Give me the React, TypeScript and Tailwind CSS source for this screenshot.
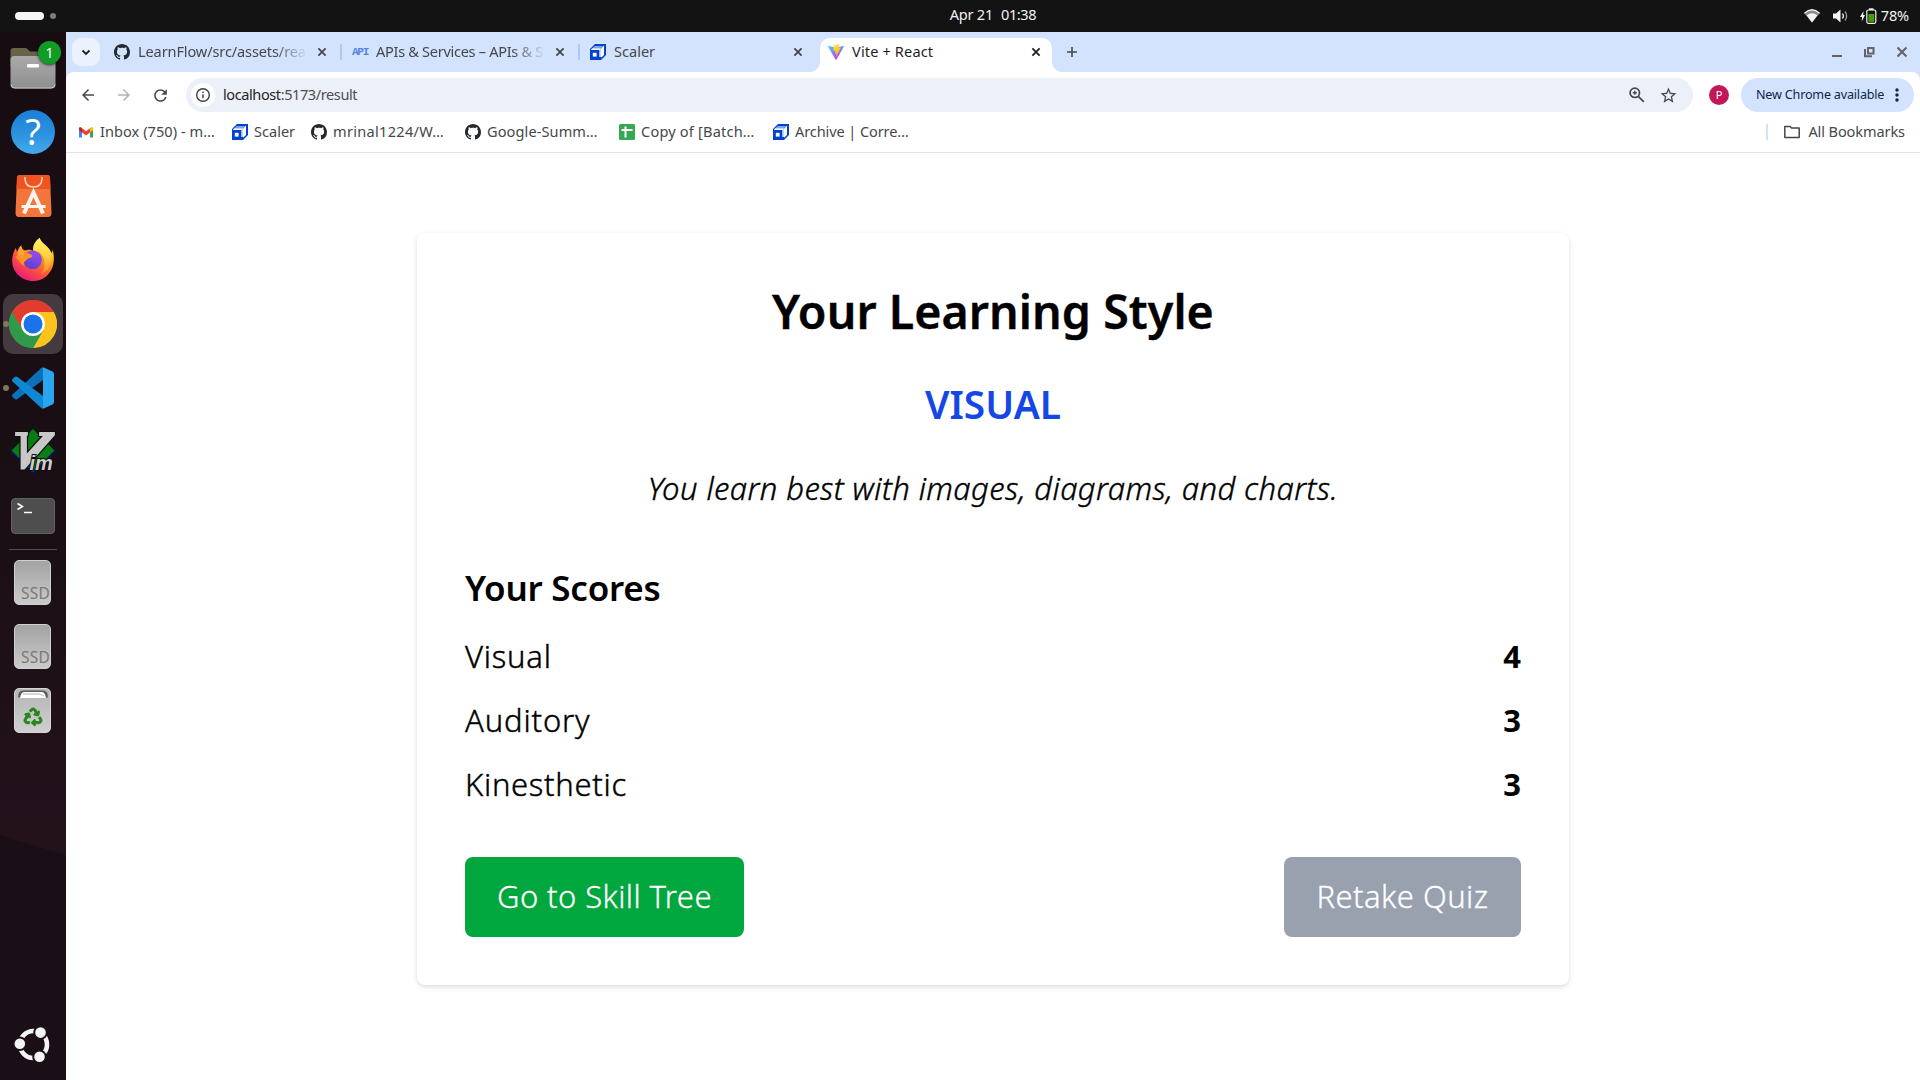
import type { ReactNode } from "react";
import { MdArrowBack, MdArrowForward, MdMoreVert, MdRefresh, MdStarOutline } from "react-icons/md";
import { FaRecycle } from "react-icons/fa";

/* ---------- small icons ---------- */

function GithubIcon() {
  return (
    <svg viewBox="0 0 16 16" className="size-4 shrink-0" fill="#24292f">
      <path d="M8 0C3.58 0 0 3.58 0 8c0 3.54 2.29 6.53 5.47 7.59.4.07.55-.17.55-.38 0-.19-.01-.82-.01-1.49-2.01.37-2.53-.49-2.69-.94-.09-.23-.48-.94-.82-1.13-.28-.15-.68-.52-.01-.53.63-.01 1.08.58 1.23.82.72 1.21 1.87.87 2.33.66.07-.52.28-.87.51-1.07-1.78-.2-3.64-.89-3.64-3.95 0-.87.31-1.59.82-2.15-.08-.2-.36-1.02.08-2.12 0 0 .67-.21 2.2.82.64-.18 1.32-.27 2-.27s1.36.09 2 .27c1.53-1.04 2.2-.82 2.2-.82.44 1.1.16 1.92.08 2.12.51.56.82 1.27.82 2.15 0 3.07-1.87 3.75-3.65 3.95.29.25.54.73.54 1.48 0 1.07-.01 1.93-.01 2.2 0 .21.15.46.55.38A8.01 8.01 0 0 0 16 8c0-4.42-3.58-8-8-8z" />
    </svg>
  );
}

function ScalerIcon() {
  return (
    <svg viewBox="0 0 16 16" className="size-4 shrink-0">
      <path d="M5 0H16V11L11 16H0V5L5 0Z" fill="#0043ce" />
      <path d="M4.600 2H13L10.800 4.200H2.400Z" fill="#7fa3ee" />
      <path d="M2 4.200H10.800V13H9.400V6H1Z" fill="#ffffff" />
      <path d="M11 4.400L14 1.600V11L11 13.800Z" fill="#ffffff" />
      <path d="M0 6H9V16H0Z" fill="#0043ce" />
      <rect x="2.800" y="8.800" width="3.800" height="3.800" fill="#ffffff" />
    </svg>
  );
}

function ApiIcon() {
  return (
    <span className="flex size-4 shrink-0 items-center justify-center font-['Liberation_Mono'] text-[11px] font-bold tracking-[-1.3px] text-[#5583e6]">
      API
    </span>
  );
}

function ViteIcon() {
  return (
    <svg viewBox="0 0 32 32" className="size-4 shrink-0">
      <defs>
        <linearGradient id="viteBody" x1="0" y1="0" x2="0.6" y2="1">
          <stop offset="0" stopColor="#41d1ff" />
          <stop offset="1" stopColor="#bd34fe" />
        </linearGradient>
        <linearGradient id="viteBolt" x1="0.4" y1="0" x2="0.6" y2="1">
          <stop offset="0" stopColor="#ffea83" />
          <stop offset="0.2" stopColor="#ffdd35" />
          <stop offset="1" stopColor="#ffa800" />
        </linearGradient>
      </defs>
      <path d="M31.5 5.4L16.7 31.3a.8.8 0 0 1-1.4 0L.2 5.4A.8.8 0 0 1 1 4.200L16 6.900 30.700 4.200a.8.8 0 0 1 .8 1.200Z" fill="url(#viteBody)" />
      <path d="M22.800.01L11.900 2.100a.4.4 0 0 0-.3.4L10.900 13.800c0 .3.200.5.500.4l3-.7c.3-.1.5.2.5.5l-.9 4.400c-.1.3.2.6.5.5l1.900-.6c.3-.1.6.2.5.5l-1.400 6.900c-.1.4.5.7.7.3l9.200-18.400c.1-.3-.1-.6-.5-.6l-3.300.6c-.3.100-.600-.200-.500-.500l2.100-6.600c.1-.3-.1-.6-.4-.5Z" fill="url(#viteBolt)" />
    </svg>
  );
}

function GmailIcon() {
  return (
    <svg viewBox="0 0 16 16" className="size-4 shrink-0">
      <path d="M1 4V13.500H4V7.500Z" fill="#4285f4" />
      <path d="M15 4V13.500H12V7.500Z" fill="#34a853" />
      <path d="M12 4.200L13.200 3.200Q15 2.600 15 4.600V6.200L12 8.500Z" fill="#fbbc04" />
      <path d="M4 4.200L8 7.200L12 4.200V8.500L8 11.500L4 8.500Z" fill="#ea4335" />
      <path d="M4 4.200L2.800 3.200Q1 2.600 1 4.600V6.200L4 8.500Z" fill="#c5221f" />
    </svg>
  );
}

function SheetIcon() {
  return (
    <svg viewBox="0 0 16 16" className="size-4 shrink-0">
      <rect width="16" height="16" rx="1.500" fill="#34a853" />
      <path d="M2.500 6H13.500M6.500 2.500V13.500" stroke="#fff" strokeWidth="2" />
    </svg>
  );
}

function CloseIcon({ color }: { color: string }) {
  return (
    <svg viewBox="0 0 16 16" className="size-4 shrink-0" fill="none" stroke={color} strokeWidth="1.800">
      <path d="M4.400 4.400L11.600 11.600M11.600 4.400L4.400 11.600" />
    </svg>
  );
}

/* ---------- desktop top bar ---------- */

function TopBar() {
  return (
    <header className="relative flex h-8 items-center justify-between bg-[#131313] pl-[15px] pr-[11px] text-[14.55px] text-[#f2f2f2]">
      <div className="flex items-center gap-[6px]">
        <div className="h-2 w-[29px] rounded-full bg-[#f5f5f5]" />
        <div className="size-[6px] rounded-full bg-[#7d7d7d]" />
      </div>
      <div className="absolute left-[66px] right-0 flex justify-center gap-[8px] pb-[2px]">
        <span className="tracking-[-0.25px]">Apr 21</span>
        <span className="tracking-[-0.4px]">01:38</span>
      </div>
      <div className="flex items-center">
        <svg viewBox="0 0 16 14" className="mr-[13px] h-[14px] w-4">
          <path d="M0.300 4.300Q8-2.600 15.700 4.300L8 13.500Z" fill="#8a8a8a" />
          <path d="M0.300 4.300Q8-2.600 15.700 4.300" fill="none" stroke="#f2f2f2" strokeWidth="1.400" />
          <path d="M2.600 6.200Q8 2.200 13.400 6.200L8 13.500Z" fill="#f2f2f2" />
        </svg>
        <svg viewBox="0 0 16 14" className="mr-[11px] h-[14px] w-4" fill="none" stroke="#f2f2f2">
          <path d="M0 4.500H3L7.500 0.500V13.500L3 9.500H0Z" fill="#f2f2f2" stroke="none" />
          <path d="M9.500 4.500Q11.200 7 9.500 9.500" strokeWidth="1.300" />
          <path d="M12 2.500Q15.300 7 12 11.500" stroke="#9a9a9a" strokeWidth="1.300" />
        </svg>
        <svg viewBox="0 0 17 16" className="mr-[4px] h-4 w-[17px]">
          <path d="M3.500 3L0 9H2L1.800 13.500L5 7H3.200Z" fill="#f2f2f2" />
          <rect x="6.800" y="2" width="9" height="13.300" rx="1.500" fill="none" stroke="#f2f2f2" strokeWidth="1.200" />
          <rect x="9" y="0.300" width="4.500" height="1.800" fill="#f2f2f2" />
          <rect x="8.300" y="6" width="6" height="7.800" fill="#4e9a06" />
        </svg>
        <span className="tracking-[-0.2px]">78%</span>
      </div>
    </header>
  );
}

/* ---------- dock ---------- */

function FilesIcon() {
  return (
    <div className="relative">
      <svg viewBox="0 0 46 44" className="h-11 w-[46px]">
        <defs>
          <linearGradient id="folderFront" x1="0" y1="0" x2="0" y2="1">
            <stop offset="0" stopColor="#ababab" />
            <stop offset="1" stopColor="#8e8e8e" />
          </linearGradient>
        </defs>
        <path d="M0.500 14V5Q0.500 2 3.500 2H15Q17 2 18.500 4L20 5.500H42Q45 5.500 45 8.500V20H0.500Z" fill="#66634a" />
        <rect x="0.500" y="10" width="45" height="32.500" rx="4" fill="url(#folderFront)" />
        <path d="M1 38.500Q1 42 5 42H41Q45 42 45 38.500" fill="none" stroke="#c4c4c4" />
        <rect x="17" y="18" width="12" height="3.500" rx="1.200" fill="#ffffff" />
      </svg>
      <div className="absolute -right-[5px] -top-[5px] flex size-[23px] items-center justify-center rounded-full bg-[#119c26] text-[14px] leading-none text-white shadow-[0_1px_3px_rgba(0,0,0,0.7)]">
        1
      </div>
    </div>
  );
}

function HelpIcon() {
  return (
    <div className="flex size-11 items-center justify-center rounded-full bg-linear-to-b from-[#1b80d8] via-[#2a90de] to-[#44aaec] text-[36px] leading-none text-white">
      ?
    </div>
  );
}

function StoreIcon() {
  return (
    <svg viewBox="0 0 37 42" className="h-[42px] w-[37px]">
      <path d="M5 0H32Q35 0 35 3L36.500 38Q36.500 42 33 42H4Q0.500 42 0.500 38L2 3Q2 0 5 0Z" fill="#f2763c" />
      <path d="M5 0H32Q35 0 35 3L35.500 14H1.500L2 3Q2 0 5 0Z" fill="#ef5420" />
      <path d="M10 2V4Q10.500 12 18.500 12Q26.500 12 27 4V2" fill="none" stroke="#fdd9c8" strokeWidth="1.500" />
      <path d="M9 38.500L18.500 17.500L28 38.500" fill="none" stroke="#fff4ee" strokeWidth="4" />
      <path d="M6.500 31.500H30.500" stroke="#fff4ee" strokeWidth="3" />
    </svg>
  );
}

function FirefoxIcon() {
  return (
    <svg viewBox="0 0 126 130" className="mb-[2px] h-[43px] w-[42px]">
      <defs>
        <linearGradient id="foxFlame" x1="0.850" y1="0.050" x2="0.250" y2="1">
          <stop offset="0" stopColor="#fff44f" />
          <stop offset="0.300" stopColor="#ffa91e" />
          <stop offset="0.600" stopColor="#ff5a36" />
          <stop offset="1" stopColor="#e8157e" />
        </linearGradient>
        <linearGradient id="foxGlobe" x1="0.800" y1="0" x2="0.300" y2="1">
          <stop offset="0" stopColor="#9a4df5" />
          <stop offset="1" stopColor="#5b3fc8" />
        </linearGradient>
        <linearGradient id="foxTail" x1="0.500" y1="0" x2="0.500" y2="1">
          <stop offset="0" stopColor="#fff36b" />
          <stop offset="0.500" stopColor="#ffd23a" />
          <stop offset="1" stopColor="#ff8a2a" />
        </linearGradient>
      </defs>
      <path d="M83 0C88 18 112 24 119 46C122 42 122 38 121 33C127 48 127 64 125 76C119 110 92 130 63 130C28 130 0 102 0 68C0 54 4 42 11 30L15 42C18 34 22 26 28 22C28 30 32 36 38 38C48 34 58 36 64 40C60 24 72 8 83 0Z" fill="url(#foxFlame)" />
      <path d="M83 0C88 18 112 24 119 50C122 78 110 100 88 108C100 92 102 66 88 48C82 40 70 42 64 36C62 22 72 8 83 0Z" fill="url(#foxTail)" />
      <circle cx="62" cy="66" r="28" fill="url(#foxGlobe)" />
      <path d="M10 58C18 46 28 44 38 46C48 44 56 50 62 54C60 62 46 60 44 66C40 72 32 70 36 84C24 78 20 66 10 58Z" fill="#ff9324" />
      <path d="M26 24C28 32 34 38 42 40C36 44 34 48 36 54C28 50 22 50 16 54C16 42 20 32 26 24Z" fill="#ffa436" />
    </svg>
  );
}

function ChromeIcon() {
  return (
    <svg viewBox="0 0 48 48" className="size-12">
      <circle cx="24" cy="24" r="24" fill="#34a04f" />
      <path d="M24 24L3.200 12A24 24 0 0 1 44.800 12Z" fill="#e33b2e" />
      <path d="M24 12H44.800A24 24 0 0 1 24 48L34.400 30Z" fill="#fcc31e" />
      <path d="M3.200 12A24 24 0 0 0 24 48L34.400 30L13.600 30Z" fill="#2f9a4a" />
      <path d="M3.200 12L13.600 30L24 12Z" fill="#e33b2e" />
      <circle cx="24" cy="24" r="12" fill="#ffffff" />
      <circle cx="24" cy="24" r="9.500" fill="#1a73e8" />
    </svg>
  );
}

function CodeIcon() {
  return (
    <svg viewBox="0 0 42 42" className="size-[42px]">
      <path d="M31 0.500V13L5.500 32Q4 33 2.800 32L0.500 30Q-0.500 28.500 0.500 27.500L29 1.200Q30 0.300 31 0.500Z" fill="#0b71b8" />
      <path d="M31 41.500V29L5.500 10Q4 9 2.800 10L0.500 12Q-0.500 13.500 0.500 14.500L29 40.800Q30 41.700 31 41.500Z" fill="#1188d4" />
      <path d="M31 0.300L40.500 4.500Q42 5.300 42 7V35Q42 36.700 40.500 37.500L31 41.700Z" fill="#2aa5f0" />
    </svg>
  );
}

function VimIcon() {
  return (
    <svg viewBox="0 0 46 46" className="mb-[2px] size-[46px]">
      <path d="M23 0.500L45.500 23L23 45.500L0.500 23Z" fill="#0a7d12" stroke="#04120a" />
      <path d="M1 23L23 45L45 23" fill="none" stroke="#0b0b78" strokeWidth="1.600" />
      <path d="M4.500 3.500H18.500V7.500L17.500 8.500V24L31.500 8.500H28.500V3.500H45.500V7.500L15 42H10V8.500H4.500Z" fill="#c8c8c8" stroke="#0d0d0d" strokeWidth="1.200" />
      <text x="19.500" y="42" fontFamily="Liberation Sans" fontSize="20" fontStyle="italic" fontWeight="700" fill="#cccccc" stroke="#0d0d0d" strokeWidth="2" paintOrder="stroke">
        im
      </text>
    </svg>
  );
}

function TerminalIcon() {
  return (
    <svg viewBox="0 0 44 36" className="h-9 w-11">
      <rect x="0.500" y="0.500" width="43" height="35" rx="3.500" fill="#4e4e4e" stroke="#616161" />
      <path d="M6.500 5.500L11.500 8.500L6.500 11.500" fill="none" stroke="#fff" strokeWidth="1.500" />
      <path d="M13 14.500H21" stroke="#fff" strokeWidth="1.500" />
    </svg>
  );
}

function DriveIcon() {
  return (
    <div className="mb-px mr-px flex h-[45px] w-[37px] items-end justify-end rounded-[5px] border border-[#d0d0d0] bg-linear-to-b from-[#a3a3a3] to-[#cacaca] pb-[2px] text-[15.5px] leading-[18px] tracking-[0.2px] text-[#7a7a7a]">
      SSD
    </div>
  );
}

function TrashIcon() {
  return (
    <div className="relative mb-px mr-px flex h-[45px] w-[37px] items-center justify-center rounded-[5px] border border-[#d6d6d6] bg-linear-to-b from-[#b5b5b5] to-[#cfcfcf] pt-[12px]">
      <svg viewBox="0 0 30 8" className="absolute left-[3px] top-[1px] h-2 w-[30px]">
        <path d="M0 7.500Q0 0.500 5 0.500H25Q30 0.500 30 7.500Z" fill="#5a5a5a" />
        <path d="M2 8Q3 2 6 2H24Q27 2 28 8Z" fill="#ffffff" />
        <path d="M5 4H22L26 6" fill="none" stroke="#b0b0b0" />
      </svg>
      <FaRecycle className="size-[18px] stroke-[#26851c] stroke-[28px] overflow-visible text-[#26851c]" />
    </div>
  );
}

function UbuntuIcon() {
  return (
    <svg viewBox="0 0 40 40" className="size-10">
      <circle cx="20.500" cy="20.500" r="13.500" fill="none" stroke="#f4f4f4" strokeWidth="4.600" />
      <g fill="#f4f4f4" stroke="#1c1017" strokeWidth="2">
        <circle cx="27.500" cy="8.600" r="6.300" />
        <circle cx="6.800" cy="19.800" r="6.300" />
        <circle cx="26.500" cy="32.800" r="6.300" />
      </g>
    </svg>
  );
}

function DockItem({ children, active = false, running = false }: { children: ReactNode; active?: boolean; running?: boolean }) {
  return (
    <div className="relative flex h-16 w-full shrink-0 items-center justify-center">
      <div className={active ? "flex size-[60px] items-center justify-center rounded-[10px] bg-[#463a41]" : "flex size-[60px] items-center justify-center"}>
        {children}
      </div>
      {running && <div className="absolute left-[3px] top-[29px] size-[6px] rounded-full bg-[#7f7859]" />}
    </div>
  );
}

function Dock() {
  return (
    <aside className="flex w-[66px] shrink-0 flex-col items-center bg-[linear-gradient(197deg,transparent_0%,transparent_77%,#1a0f16_77.1%),linear-gradient(180deg,#170c12_0%,#1b0f16_50%,#24121b_78%)] py-1">
      <DockItem><FilesIcon /></DockItem>
      <DockItem><HelpIcon /></DockItem>
      <DockItem><StoreIcon /></DockItem>
      <DockItem><FirefoxIcon /></DockItem>
      <DockItem active running><ChromeIcon /></DockItem>
      <DockItem running><CodeIcon /></DockItem>
      <DockItem><VimIcon /></DockItem>
      <DockItem><TerminalIcon /></DockItem>
      <div className="my-px h-px w-12 shrink-0 bg-[#564b51]" />
      <DockItem><DriveIcon /></DockItem>
      <DockItem><DriveIcon /></DockItem>
      <DockItem><TrashIcon /></DockItem>
      <div className="mt-auto">
        <DockItem><UbuntuIcon /></DockItem>
      </div>
    </aside>
  );
}

/* ---------- browser chrome ---------- */

function Tab({ icon, children, divider = false }: { icon: ReactNode; children: ReactNode; divider?: boolean }) {
  return (
    <div className="relative flex h-[28px] w-[238px] items-center pl-[11px] text-[#45474a]">
      {icon}
      <div className="ml-2 w-[170px] whitespace-nowrap">{children}</div>
      <div className="ml-[6px]"><CloseIcon color="#45474a" /></div>
      {divider && <div className="absolute -right-px top-[6px] h-4 w-[2px] rounded-full bg-[#a8c7fa]" />}
    </div>
  );
}

function TabStrip() {
  return (
    <div className="flex h-10 bg-[#d3e3fd] pl-[6px] pt-[6px] text-[14.55px]">
      <div className="mr-[3px] flex size-7 items-center justify-center rounded-[9px] bg-[#ebf1fd]">
        <svg viewBox="0 0 10 10" className="size-[10px]" fill="none" stroke="#1f1f1f" strokeWidth="1.800">
          <path d="M1.500 3.500L5 7L8.500 3.500" />
        </svg>
      </div>
      <Tab icon={<GithubIcon />} divider>
        <div className="tracking-[-0.12px] [mask-image:linear-gradient(to_right,#000_80%,transparent_100%)]">LearnFlow/src/assets/rea</div>
      </Tab>
      <Tab icon={<ApiIcon />} divider>
        <div className="tracking-[-0.3px] [mask-image:linear-gradient(to_right,#000_80%,transparent_100%)]">APIs &amp; Services – APIs &amp; S</div>
      </Tab>
      <Tab icon={<ScalerIcon />}>Scaler</Tab>
      <div className="relative mx-[3px] flex h-[34px] w-[232px] items-start rounded-t-[10px] bg-white pl-2 text-[#1f1f1f]">
        <div className="absolute -left-[10px] bottom-0 size-[10px] bg-[radial-gradient(circle_at_0_0,#d3e3fd_9.500px,#fff_10.200px)]" />
        <div className="absolute -right-[10px] bottom-0 size-[10px] bg-[radial-gradient(circle_at_100%_0,#d3e3fd_9.500px,#fff_10.200px)]" />
        <div className="flex h-7 items-center">
          <ViteIcon />
          <span className="ml-2 w-[176px] tracking-[0.15px]">Vite + React</span>
          <CloseIcon color="#1f1f1f" />
        </div>
      </div>
      <svg viewBox="0 0 12 12" className="ml-[11px] mt-2 size-3" fill="none" stroke="#45474a" strokeWidth="1.600">
        <path d="M6 1V11M1 6H11" />
      </svg>
      <div className="ml-auto flex h-7 items-center gap-[17px] pr-[10px]">
        <svg viewBox="0 0 16 16" className="size-4"><rect x="4" y="11" width="10" height="2" fill="#5f6368" /></svg>
        <svg viewBox="0 0 16 16" className="size-4" fill="none" stroke="#5f6368" strokeWidth="2">
          <rect x="7" y="4" width="5.500" height="5.500" />
          <path d="M4 5V12.300H11" />
        </svg>
        <svg viewBox="0 0 16 16" className="size-4" fill="none" stroke="#5f6368" strokeWidth="2">
          <path d="M3.500 3.500L12.500 12.500M12.500 3.500L3.500 12.500" />
        </svg>
      </div>
    </div>
  );
}

function Toolbar() {
  return (
    <div className="bg-[#d3e3fd]">
      <div className="flex h-[46px] items-center rounded-t-[8px] bg-white pl-[13px] pr-[6px] text-[14.55px]">
        <MdArrowBack className="size-[18px] text-[#45474a]" />
        <MdArrowForward className="ml-[18px] size-[18px] text-[#b0b2b5]" />
        <MdRefresh className="ml-[18px] size-[19px] text-[#45474a]" />
        <div className="ml-4 flex h-[34px] w-[1507px] items-center rounded-full bg-[#ecf0f9] pl-[5px] pr-[15px]">
          <div className="flex size-6 items-center justify-center rounded-full bg-white">
            <svg viewBox="0 0 16 16" className="size-4" fill="none" stroke="#3c3e41" strokeWidth="1.400">
              <circle cx="8" cy="8" r="6.300" />
              <path d="M8 7.200V11.300M8 4.600V6.100" />
            </svg>
          </div>
          <div className="ml-2 tracking-[-0.42px] text-[#4b4d50]">
            <span className="text-[#1f1f1f]">localhost</span>:5173/result
          </div>
          <svg viewBox="0 0 18 18" className="ml-auto size-[18px]" fill="none" stroke="#45474a" strokeWidth="1.700">
            <circle cx="6.800" cy="6.800" r="4.700" />
            <path d="M10.300 10.300L15.800 15.800" />
            <path d="M4.800 6.800H8.800M6.800 4.800V8.800" strokeWidth="1.400" />
          </svg>
          <MdStarOutline className="ml-[13px] size-[19px] text-[#45474a]" />
        </div>
        <div className="ml-4 flex size-5 items-center justify-center rounded-full bg-[#c2185b] text-[11px] text-white">P</div>
        <div className="ml-auto flex h-[34px] w-[173px] items-center rounded-full bg-[#d3e3fd] pl-[15px] text-[12.600px] text-[#0b2552]">
          <span className="w-[131px] whitespace-nowrap tracking-[-0.2px]">New Chrome available</span>
          <MdMoreVert className="size-5" />
        </div>
      </div>
    </div>
  );
}

function BookmarkBar() {
  return (
    <div className="flex h-[35px] items-start border-b border-[#e0e2e5] bg-white pl-3 pr-[15px] pt-[3px] text-[14.55px] text-[#45474a]">
      <div className="flex h-[22px] w-[154px] items-center gap-[6px]"><GmailIcon /><span className="tracking-[0.05px]">Inbox (750) - m…</span></div>
      <div className="flex h-[22px] w-[79px] items-center gap-[6px]"><ScalerIcon /><span>Scaler</span></div>
      <div className="flex h-[22px] w-[154px] items-center gap-[6px]"><GithubIcon /><span className="tracking-[0.3px]">mrinal1224/W…</span></div>
      <div className="flex h-[22px] w-[154px] items-center gap-[6px]"><GithubIcon /><span className="tracking-[0.100px]">Google-Summ…</span></div>
      <div className="flex h-[22px] w-[154px] items-center gap-[6px]"><SheetIcon /><span className="tracking-[0.2px]">Copy of [Batch…</span></div>
      <div className="flex h-[22px] items-center gap-[6px]"><ScalerIcon /><span className="tracking-[-0.1px]">Archive | Corre…</span></div>
      <div className="ml-auto flex h-[22px] items-center">
        <div className="h-4 w-[2px] bg-[#d3e3fd]" />
        <svg viewBox="0 0 16 14" className="ml-4 h-[14px] w-4" fill="none" stroke="#45474a" strokeWidth="1.500">
          <path d="M0.800 1.500H6L7.500 3H15.200V12.500H0.800Z" strokeLinejoin="round" />
        </svg>
        <span className="ml-2 tracking-[-0.1px]">All Bookmarks</span>
      </div>
    </div>
  );
}

/* ---------- page ---------- */

const scores = [
  { label: "Visual", value: 4, spacing: "tracking-[0.75px]" },
  { label: "Auditory", value: 3, spacing: "tracking-[0.85px]" },
  { label: "Kinesthetic", value: 3, spacing: "tracking-[0.7px]" },
];

function ResultPage() {
  return (
    <main className="flex-1 bg-white pt-20">
      <section className="mx-auto w-6xl rounded-lg bg-white p-12 text-black shadow-[0_2px_6px_rgba(0,0,0,0.1),0_2px_4px_-2px_rgba(0,0,0,0.1)]">
        <h1 className="mb-8 pb-1 text-center text-[46.500px] font-semibold leading-[60px] tracking-[0.08px] [-webkit-text-stroke:0.4px_#000]">Your Learning Style</h1>
        <h2 className="mb-8 pb-0.5 text-center text-[38.800px] font-semibold leading-[54px] text-blue-700">VISUAL</h2>
        <p className="mb-12 pb-0.5 text-center text-[31px] font-light italic leading-[46px] tracking-[0.4px] [-webkit-text-stroke:0.4px_#000]">
          You learn best with images, diagrams, and charts.
        </p>
        <h3 className="mb-4 pb-0.5 text-[35px] font-semibold leading-[54px] tracking-[-0.25px]">Your Scores</h3>
        <ul className="flex flex-col gap-4 text-[31px] leading-[46px]">
          {scores.map((s) => (
            <li key={s.label} className="flex justify-between pb-0.5">
              <span className={`font-light [-webkit-text-stroke:0.4px_#000] ${s.spacing}`}>{s.label}</span>
              <span className="font-bold">{s.value}</span>
            </li>
          ))}
        </ul>
        <div className="mt-12 flex justify-between text-[31px] font-light leading-[48px] text-white [-webkit-text-stroke:0.3px_#fff]">
          <button className="h-20 w-[279px] rounded-lg bg-green-600 pb-0.5 whitespace-nowrap tracking-[0.4px]">Go to Skill Tree</button>
          <button className="h-20 w-[237px] rounded-lg bg-gray-400 pb-0.5 whitespace-nowrap tracking-[0.45px]">Retake Quiz</button>
        </div>
      </section>
    </main>
  );
}

export default function App() {
  return (
    <div className="flex h-[1080px] w-[1920px] flex-col overflow-hidden font-['Noto_Sans','Open_Sans',sans-serif]">
      <TopBar />
      <div className="flex min-h-0 flex-1">
        <Dock />
        <div className="flex flex-1 flex-col">
          <TabStrip />
          <Toolbar />
          <BookmarkBar />
          <ResultPage />
        </div>
      </div>
    </div>
  );
}
